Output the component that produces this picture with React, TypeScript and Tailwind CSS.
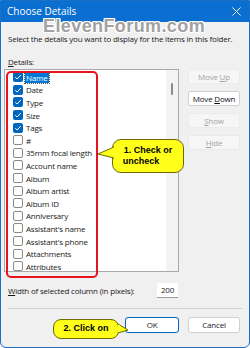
const items = [
  { label: "Name", checked: true },
  { label: "Date", checked: true },
  { label: "Type", checked: true },
  { label: "Size", checked: true },
  { label: "Tags", checked: true },
  { label: "#", checked: false },
  { label: "35mm focal length", checked: false },
  { label: "Account name", checked: false },
  { label: "Album", checked: false },
  { label: "Album artist", checked: false },
  { label: "Album ID", checked: false },
  { label: "Anniversary", checked: false },
  { label: "Assistant's name", checked: false },
  { label: "Assistant's phone", checked: false },
  { label: "Attachments", checked: false },
  { label: "Attributes", checked: false },
];

function Checkbox({ checked }: { checked: boolean }) {
  if (checked) {
    return (
      <div className="w-[10px] h-[10px] rounded-[2px] bg-[#0067c0] flex items-center justify-center shrink-0">
        <svg width="8" height="8" viewBox="0 0 8 8">
          <path d="M1.3 4.2 L3.1 6 L6.8 2" fill="none" stroke="white" strokeWidth="1" />
        </svg>
      </div>
    );
  }
  return <div className="w-[10px] h-[10px] rounded-[2px] bg-white border border-[#8a8a8a] shrink-0"></div>;
}

function SideButton({ label, u, enabled }: { label: string; u: number; enabled?: boolean }) {
  return (
    <div
      className={
        enabled
          ? "h-[15px] w-[52px] flex items-center justify-center rounded-[2px] bg-white border border-[#d0d0d0] text-[#111] whitespace-pre"
          : "h-[15px] w-[52px] flex items-center justify-center rounded-[2px] bg-[#f6f6f6] border border-[#ebebeb] text-[#a3a3a3] whitespace-pre"
      }
    >
      {label.slice(0, u)}
      <span className="underline">{label[u]}</span>
      {label.slice(u + 1)}
    </div>
  );
}

export default function App() {
  return (
    <div
      className="relative w-[250px] h-[348px] bg-[#f0f0f0] border border-[#1a6fc7] rounded-b-[6px] overflow-hidden text-[8px] tracking-[-0.2px] text-[#1a1a1a]"
      style={{ fontFamily: '"Open Sans", "Noto Sans", sans-serif' }}
    >
      <div className="h-[21px] bg-[#0a6fd0] flex items-center justify-between pl-[6px] pr-[8px] text-white text-[10px] tracking-normal">
        <span>Choose Details</span>
        <svg width="9" height="9" viewBox="0 0 9 9">
          <path d="M0.5 0.5 L8.5 8.5 M8.5 0.5 L0.5 8.5" stroke="white" strokeWidth="1" />
        </svg>
      </div>

      <div
        className="absolute left-[42px] top-[16px] text-[18px] leading-none font-bold text-[#a2a2a2] tracking-[0.4px]"
        style={{
          fontFamily: '"Liberation Sans", Arial, sans-serif',
          textShadow: "1px 0 0 #fff, -1px 0 0 #fff, 0 1px 0 #fff, 0 -1px 0 #fff, 1px 1px 0 #fff, -1px -1px 0 #fff, 1px -1px 0 #fff, -1px 1px 0 #fff",
        }}
      >
        ElevenForum.com
      </div>

      <div className="relative pl-[7px] pt-[11px] leading-[12px] whitespace-nowrap">
        Select the details you want to display for the items in this folder.
      </div>

      <div className="pl-[7px] pt-[11px] leading-[12px]">
        <span className="underline">D</span>etails:
      </div>

      <div className="flex mt-[1px] pl-[3px]">
        <div className="w-[175px] h-[203px] bg-white border border-[#a9a9a9] flex">
          <div className="flex-1 pt-[1px] pl-[8px]">
            {items.map((it, i) => (
              <div key={it.label} className="h-[12.6px] flex items-center gap-[2px] whitespace-nowrap">
                <Checkbox checked={it.checked} />
                <span
                  className={
                    i === 0
                      ? "bg-[#0078d7] text-white px-[1px] leading-[11px] outline-1 outline-dotted outline-[#555]"
                      : "px-[1px] leading-[11px]"
                  }
                >
                  {it.label}
                </span>
              </div>
            ))}
          </div>
          <div className="w-[12px] bg-[#f3f3f3] flex justify-center pt-[13px]">
            <div className="w-[2px] h-[12px] rounded-full bg-[#8a8a8a]"></div>
          </div>
        </div>

        <div className="flex flex-col gap-[7px] pl-[9px] text-[8px]">
          <SideButton label="Move Up" u={5} />
          <SideButton label="Move Down" u={5} enabled />
          <SideButton label="Show" u={0} />
          <SideButton label="Hide" u={0} />
        </div>
      </div>

      <div className="flex items-center pl-[7px] mt-[11px] h-[15px]">
        <span className="w-[149px]">
          <span className="underline">W</span>idth of selected column (in pixels):
        </span>
        <div className="w-[21px] h-[15px] bg-white border-b border-[#9a9a9a] flex items-center justify-center">200</div>
      </div>

      <div className="mx-[7px] mt-[10px] h-px bg-[#cfcfcf]"></div>

      <div className="flex justify-end gap-[9px] pr-[9px] mt-[8px]">
        <div className="w-[54px] h-[16px] bg-white border border-[#0067c0] rounded-[3px] flex items-center justify-center">OK</div>
        <div className="w-[52px] h-[16px] bg-white border border-[#d0d0d0] rounded-[3px] flex items-center justify-center">Cancel</div>
      </div>

      {/* red highlight */}
      <div className="absolute left-[5px] top-[70px] w-[92px] h-[207px] border-2 border-[#e8141c] rounded-[5px]"></div>

      {/* callout 1 */}
      <div
        className="absolute left-[111px] top-[138px] w-[72px] h-[34px] bg-[#ffff1a] border border-[#6b6b00] rounded-[9px] flex flex-col items-center justify-center text-[9px] font-bold leading-[11px] tracking-normal text-black"
        style={{ fontFamily: '"Liberation Sans", Arial, sans-serif' }}
      >
        <span>1. Check or</span>
        <span className="pr-[14px]">uncheck</span>
      </div>
      <svg className="absolute left-[96px] top-[145px]" width="18" height="14" viewBox="0 0 18 14">
        <path d="M17 1 L1 8 L17 12" fill="#ffff1a" stroke="#6b6b00" strokeWidth="1" />
        <path d="M16 2 L16 11" stroke="#ffff1a" strokeWidth="2" />
      </svg>

      {/* callout 2 */}
      <div
        className="absolute left-[52px] top-[318px] w-[66px] h-[20px] bg-[#ffff1a] border border-[#6b6b00] rounded-[8px] flex items-center justify-center text-[9px] font-bold tracking-normal text-black"
        style={{ fontFamily: '"Liberation Sans", Arial, sans-serif' }}
      >
        2. Click on
      </div>
      <svg className="absolute left-[116px] top-[322px]" width="12" height="12" viewBox="0 0 12 12">
        <path d="M1 1 L11 7 L1 10" fill="#ffff1a" stroke="#6b6b00" strokeWidth="1" />
        <path d="M2 2 L2 9" stroke="#ffff1a" strokeWidth="2" />
      </svg>
    </div>
  );
}
